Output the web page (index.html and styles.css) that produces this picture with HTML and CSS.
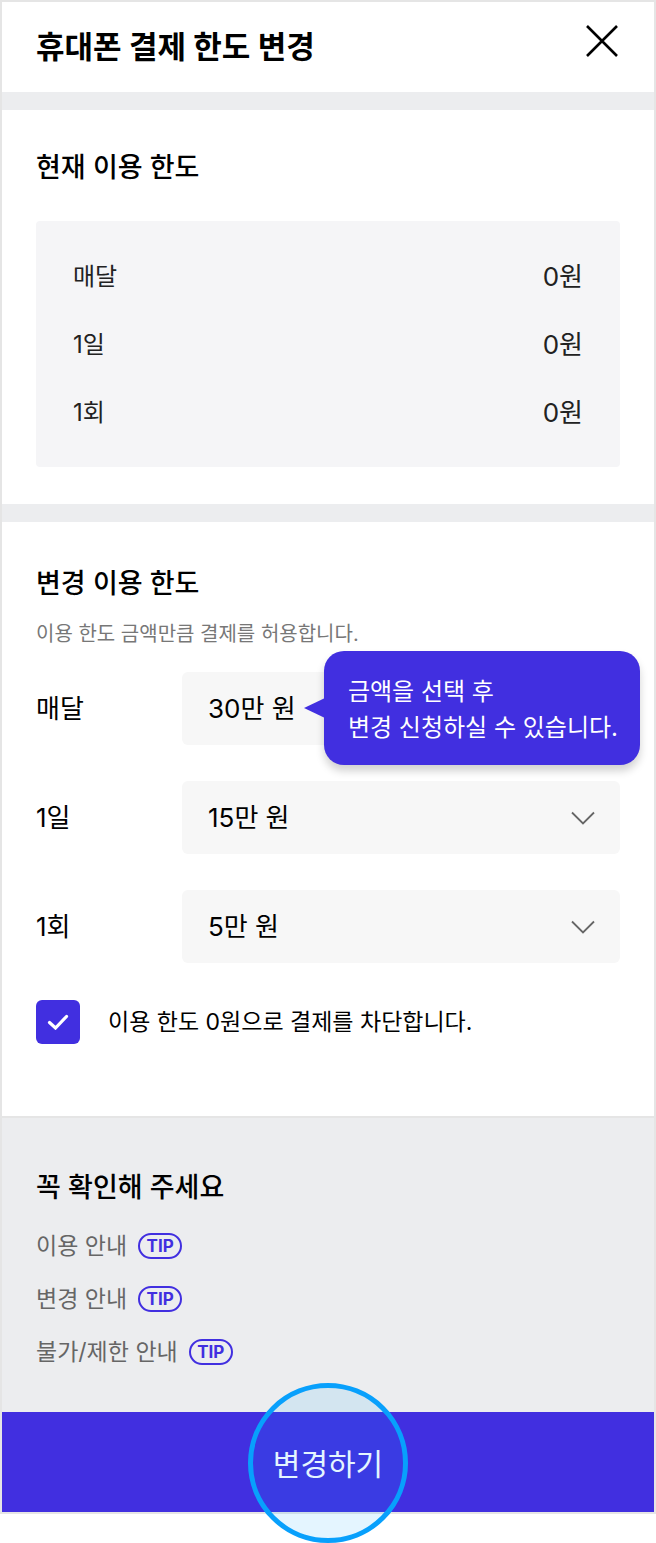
FILE: index.html
```html
<!DOCTYPE html>
<html lang="ko">
<head>
<meta charset="utf-8">
<meta name="viewport" content="width=device-width, initial-scale=1">
<title>휴대폰 결제 한도 변경</title>
<link rel="stylesheet" href="styles.css">
</head>
<body>
<main class="sheet">
  <header class="header">
    <h1 class="header-title">휴대폰 결제 한도 변경</h1>
    <button class="close" type="button" aria-label="닫기">
      <svg width="32" height="32" viewBox="0 0 32 32" fill="none" stroke="#000" stroke-width="2.6"><path d="M1 1L31 31M31 1L1 31"/></svg>
    </button>
  </header>

  <section class="section current">
    <h2 class="heading">현재 이용 한도</h2>
    <dl class="limits">
      <div class="limit"><dt>매달</dt><dd>0원</dd></div>
      <div class="limit"><dt>1일</dt><dd>0원</dd></div>
      <div class="limit"><dt>1회</dt><dd>0원</dd></div>
    </dl>
  </section>

  <section class="section change">
    <h2 class="heading">변경 이용 한도</h2>
    <p class="description">이용 한도 금액만큼 결제를 허용합니다.</p>
    <div class="fields">
      <div class="field">
        <label class="field-label" for="month">매달</label>
        <div class="select-box">
          <select id="month" class="select"><option>30만 원</option></select>
          <svg class="chevron" width="24" height="14" viewBox="0 0 24 14" fill="none" stroke="#666" stroke-width="1.8"><path d="M1 1.5L12 12.5L23 1.5"/></svg>
          <div class="tooltip" role="tooltip">금액을 선택 후<br>변경 신청하실 수 있습니다.</div>
        </div>
      </div>
      <div class="field">
        <label class="field-label" for="day">1일</label>
        <div class="select-box">
          <select id="day" class="select"><option>15만 원</option></select>
          <svg class="chevron" width="24" height="14" viewBox="0 0 24 14" fill="none" stroke="#666" stroke-width="1.8"><path d="M1 1.5L12 12.5L23 1.5"/></svg>
        </div>
      </div>
      <div class="field">
        <label class="field-label" for="once">1회</label>
        <div class="select-box">
          <select id="once" class="select"><option>5만 원</option></select>
          <svg class="chevron" width="24" height="14" viewBox="0 0 24 14" fill="none" stroke="#666" stroke-width="1.8"><path d="M1 1.5L12 12.5L23 1.5"/></svg>
        </div>
      </div>
    </div>
    <label class="block-option">
      <span class="check-box">
        <input class="check" type="checkbox" checked>
        <svg class="check-mark" width="22" height="16" viewBox="0 0 22 16" fill="none" stroke="#fff" stroke-width="3.2" stroke-linecap="round"><path d="M2.5 8.5L8.5 14L19.5 2.5"/></svg>
      </span>
      <span>이용 한도 0원으로 결제를 차단합니다.</span>
    </label>
  </section>

  <section class="notice">
    <h2 class="heading">꼭 확인해 주세요</h2>
    <ul class="tips">
      <li class="tip">이용 안내 <button class="tip-button" type="button">TIP</button></li>
      <li class="tip">변경 안내 <button class="tip-button" type="button">TIP</button></li>
      <li class="tip">불가/제한 안내 <button class="tip-button" type="button">TIP</button></li>
    </ul>
  </section>

  <div class="footer">
    <button class="submit" type="button">변경하기</button>
    <span class="highlight" aria-hidden="true"></span>
  </div>
</main>
</body>
</html>
```
FILE: styles.css
```css
* {
  box-sizing: border-box;
}

body {
  margin: 0;
  padding-bottom: 29px;
  background: #fff;
  color: #000;
  font-family: Inter, "Noto Sans CJK KR", sans-serif;
}

h1, h2, p, dl, dd, ul {
  margin: 0;
  padding: 0;
}

button, select, input {
  margin: 0;
  border: 0;
  padding: 0;
  font-family: inherit;
}

.sheet {
  border: 2px solid #e5e5e5;
}

.header {
  display: flex;
  align-items: flex-start;
  justify-content: space-between;
  padding: 23px 36px 23px 34px;
}

.header-title {
  font-size: 31px;
  line-height: 44px;
  font-weight: 700;
}

.close {
  display: flex;
  background: none;
}

.section {
  border-top: 18px solid #ecedef;
  padding: 38px 34px;
}

.heading {
  font-size: 27px;
  line-height: 40px;
  font-weight: 500;
}

.limits {
  display: grid;
  gap: 28px;
  margin-top: 33px;
  border-radius: 4px;
  padding: 36px 37px 34px;
  background: #f5f5f7;
  color: #222;
}

.limit {
  display: flex;
  align-items: center;
  justify-content: space-between;
  font-size: 24px;
  line-height: 40px;
}

.limit dd {
  font-size: 26px;
}

.current {
  padding-bottom: 37px;
}

.change {
  padding: 42px 34px 72px;
}

.description {
  margin-top: 15px;
  color: #777;
  font-size: 20px;
  line-height: 30px;
}

.fields {
  display: grid;
  gap: 36px;
  margin-top: 23px;
}

.field {
  display: grid;
  grid-template-columns: 146px 1fr;
  align-items: center;
}

.field-label {
  font-size: 26px;
  line-height: 40px;
}

.select-box {
  position: relative;
}

.select {
  display: block;
  width: 100%;
  height: 73px;
  border-radius: 6px;
  padding: 0 64px 0 26px;
  appearance: none;
  background: #f7f7f7;
  color: #000;
  font-size: 26px;
}

.chevron {
  position: absolute;
  top: 30px;
  right: 25px;
  pointer-events: none;
}

.tooltip {
  position: absolute;
  top: -21px;
  right: -20px;
  border-radius: 20px;
  padding: 23px 22px 19px 24px;
  background: #412fe0;
  box-shadow: 0 6px 8px rgba(0, 0, 0, 0.18);
  color: #fff;
  font-size: 24px;
  line-height: 36px;
  white-space: nowrap;
}

.tooltip::before {
  content: "";
  position: absolute;
  top: 47px;
  left: -20px;
  border: solid transparent;
  border-width: 10px 21px 10px 0;
  border-right-color: #412fe0;
}

.block-option {
  display: flex;
  align-items: center;
  gap: 28px;
  margin-top: 37px;
  font-size: 23px;
  line-height: 36px;
}

.check-box {
  display: grid;
  place-items: center;
}

.check,
.check-mark {
  grid-area: 1 / 1;
}

.check {
  width: 44px;
  height: 44px;
  border-radius: 6px;
  appearance: none;
  background: #412fe0;
}

.check-mark {
  pointer-events: none;
}

.notice {
  border-top: 2px solid #e5e5e5;
  padding: 50px 34px 42px;
  background: #ecedef;
}

.tips {
  display: grid;
  gap: 17px;
  margin-top: 20px;
  list-style: none;
}

.tip {
  display: flex;
  align-items: center;
  gap: 11px;
  color: #666;
  font-size: 23px;
  line-height: 36px;
}

.tip-button {
  min-width: 44px;
  border: 2px solid #412fe0;
  border-radius: 13px;
  padding: 0 6px;
  background: none;
  color: #412fe0;
  font-size: 17px;
  line-height: 22px;
  font-weight: 700;
}

.footer {
  position: relative;
}

.submit {
  display: block;
  width: 100%;
  padding: 30px 0 26px;
  background: #412fe0;
  color: #fff;
  font-size: 30px;
  line-height: 44px;
}

.highlight {
  position: absolute;
  top: 50%;
  left: 50%;
  width: 160px;
  height: 160px;
  margin: -79px 0 0 -80px;
  border: 5px solid #08a0fc;
  border-radius: 50%;
  background: rgba(8, 160, 252, 0.11);
  pointer-events: none;
}
```
